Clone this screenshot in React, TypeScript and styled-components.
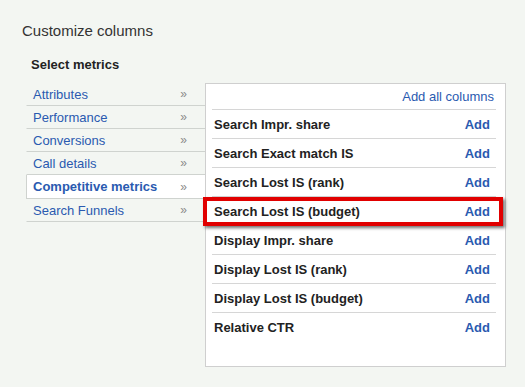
import styled, { createGlobalStyle } from 'styled-components';

const GlobalStyle = createGlobalStyle`
  body {
    margin: 0;
    background: #f3f6f2;
    font-family: Arial, "Liberation Sans", sans-serif;
  }
`;

const Page = styled.div`
  padding: 22px 0 0 22px;
  height: 365px;
`;
const Title = styled.h1`
  margin: 0;
  font-size: 15px;
  line-height: 18px;
  font-weight: 400;
  color: #333;
`;
const Section = styled.div`
  padding-left: 4px;
`;
const SubTitle = styled.h2`
  margin: 17px 0 0 5px;
  font-size: 13px;
  line-height: 16px;
  font-weight: 700;
  color: #222;
`;
const Columns = styled.div`
  display: flex;
  align-items: flex-start;
  margin-top: 10px;
`;
const CategoryList = styled.ul`
  list-style: none;
  margin: 0;
  padding: 0;
  width: 179px;
`;
const Category = styled.li<{ $active?: boolean }>`
  display: flex;
  justify-content: space-between;
  align-items: center;
  height: ${(p) => (p.$active ? '23px' : '22px')};
  padding: 0 18px 0 6px;
  border-bottom: 1px solid #cfd3cf;
  border-left: 1px solid ${(p) => (p.$active ? '#cfd3cf' : 'transparent')};
  background: ${(p) => (p.$active ? '#fff' : 'transparent')};
  font-size: 13px;
  font-weight: ${(p) => (p.$active ? 700 : 400)};
  color: #2a5ab0;
  cursor: pointer;
`;
const Chevron = styled.span`
  font-size: 12px;
  color: #8a8a8a;
  font-weight: 400;
`;
const Panel = styled.div`
  width: 301px;
  height: 284px;
  border: 1px solid #cfcfcf;
  background: #fff;
  padding: 0 9px 0 6px;
  box-sizing: border-box;
`;
const PanelHeader = styled.div`
  display: flex;
  justify-content: flex-end;
  align-items: center;
  height: 25px;
  padding-right: 2px;
  border-bottom: 1px solid #d6d6d6;
`;
const LinkText = styled.a`
  font-size: 13px;
  color: #2a5ab0;
  text-decoration: none;
  cursor: pointer;
`;
const MetricRow = styled.div<{ $highlight?: boolean }>`
  position: relative;
  display: flex;
  justify-content: space-between;
  align-items: center;
  height: 28px;
  padding: 0 6px 0 2px;
  border-bottom: 1px solid #d6d6d6;
  &:last-child {
    border-bottom-color: transparent;
  }
  ${(p) =>
    p.$highlight &&
    `
    &::after {
      content: '';
      position: absolute;
      left: -9px;
      right: -7px;
      top: 0;
      bottom: -1px;
      border: 4px solid #e10000;
      box-shadow: 2px 2px 3px rgba(0, 0, 0, 0.55);
      pointer-events: none;
    }
  `}
`;
const MetricName = styled.span`
  font-size: 13px;
  font-weight: 700;
  color: #222;
`;
const AddLink = styled(LinkText)`
  font-weight: 700;
`;

const categories = [
  'Attributes',
  'Performance',
  'Conversions',
  'Call details',
  'Competitive metrics',
  'Search Funnels',
];

const metrics = [
  'Search Impr. share',
  'Search Exact match IS',
  'Search Lost IS (rank)',
  'Search Lost IS (budget)',
  'Display Impr. share',
  'Display Lost IS (rank)',
  'Display Lost IS (budget)',
  'Relative CTR',
];

export default function App() {
  return (
    <>
      <GlobalStyle />
      <Page>
        <Title>Customize columns</Title>
        <Section>
          <SubTitle>Select metrics</SubTitle>
          <Columns>
            <CategoryList>
              {categories.map((c) => (
                <Category key={c} $active={c === 'Competitive metrics'}>
                  {c}
                  <Chevron>»</Chevron>
                </Category>
              ))}
            </CategoryList>
            <Panel>
              <PanelHeader>
                <LinkText>Add all columns</LinkText>
              </PanelHeader>
              {metrics.map((m) => (
                <MetricRow key={m} $highlight={m === 'Search Lost IS (budget)'}>
                  <MetricName>{m}</MetricName>
                  <AddLink>Add</AddLink>
                </MetricRow>
              ))}
            </Panel>
          </Columns>
        </Section>
      </Page>
    </>
  );
}
